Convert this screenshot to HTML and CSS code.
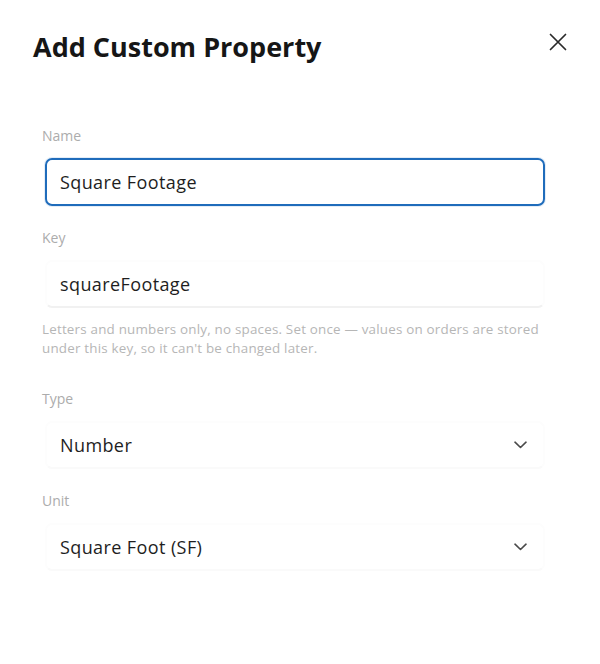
FILE: index.html
```html
<!DOCTYPE html>
<html lang="en">
<head>
<meta charset="utf-8">
<title>Add Custom Property</title>
<link rel="stylesheet" href="styles.css">
</head>
<body>
<div class="dialog">
  <header class="dialog-header">
    <h1 class="dialog-title">Add Custom Property</h1>
    <button class="close-btn" type="button" aria-label="Close">
      <svg width="18" height="18" viewBox="0 0 18 18" fill="none" stroke="#2a2a2a" stroke-width="1.7" stroke-linecap="round">
        <path d="M1.5 1.5 L16.5 16.5 M16.5 1.5 L1.5 16.5"/>
      </svg>
    </button>
  </header>
  <form class="form">
    <div class="field">
      <label class="field-label">Name</label>
      <div class="control control-focused">Square Footage</div>
    </div>
    <div class="field field-key">
      <label class="field-label">Key</label>
      <div class="control">squareFootage</div>
      <p class="helper">Letters and numbers only, no spaces. Set once — values on orders are stored under this key, so it can't be changed later.</p>
    </div>
    <div class="field">
      <label class="field-label">Type</label>
      <div class="control control-select">
        <span>Number</span>
        <svg class="chevron" width="13" height="8" viewBox="0 0 13 8" fill="none" stroke="#4a4a4a" stroke-width="1.6" stroke-linecap="round" stroke-linejoin="round"><path d="M1 1.2 L6.5 6.5 L12 1.2"/></svg>
      </div>
    </div>
    <div class="field">
      <label class="field-label">Unit</label>
      <div class="control control-select">
        <span>Square Foot (SF)</span>
        <svg class="chevron" width="13" height="8" viewBox="0 0 13 8" fill="none" stroke="#4a4a4a" stroke-width="1.6" stroke-linecap="round" stroke-linejoin="round"><path d="M1 1.2 L6.5 6.5 L12 1.2"/></svg>
      </div>
    </div>
  </form>
</div>
</body>
</html>
```
FILE: styles.css
```css
* { box-sizing: border-box; }

html, body {
  margin: 0;
  padding: 0;
  background: #ffffff;
}

body {
  font-family: "Open Sans", Lato, sans-serif;
  color: #1c1c1c;
  width: 600px;
  height: 664px;
  overflow: hidden;
}

.dialog {
  padding: 30px 32px 0 33px;
}

.dialog-header {
  display: flex;
  justify-content: space-between;
  align-items: center;
  height: 34px;
}

.dialog-title {
  margin: 0;
  font-size: 27px;
  line-height: 34px;
  font-weight: 700;
  color: #161616;
}

.close-btn {
  border: 0;
  background: none;
  padding: 0;
  width: 18px;
  height: 18px;
  margin-top: -10px;
  margin-right: 1px;
  display: flex;
}

.form {
  margin-top: 62px;
  padding-left: 9px;
  width: 515px;
}

.field {
  margin-bottom: 22px;
}

.field-key {
  margin-bottom: 31px;
}

.field-label {
  display: block;
  font-size: 14px;
  line-height: 20px;
  color: #acacac;
  margin-bottom: 12px;
}

.control {
  margin-left: 3px;
  width: 500px;
  height: 48px;
  border: 2px solid #fdfdfd;
  border-bottom-color: #f1f1f1;
  border-radius: 7px;
  padding: 0 13px;
  display: flex;
  align-items: center;
  font-size: 18px;
  letter-spacing: 0.4px;
  color: #1e1e1e;
}

.control-focused {
  border-color: #1f6cbb;
  box-shadow: 0 0 0 1px rgba(31, 108, 187, 0.12);
}

.control-select {
  justify-content: space-between;
  padding-right: 16px;
  border-bottom-color: #fafafa;
}

.control-select span {
  margin-top: -1px;
}

.chevron {
  display: block;
  margin-top: 0;
}

.helper {
  margin: 12px 0 0;
  font-size: 13.4px;
  line-height: 19px;
  letter-spacing: 0.2px;
  color: #b6b6b6;
}
```
